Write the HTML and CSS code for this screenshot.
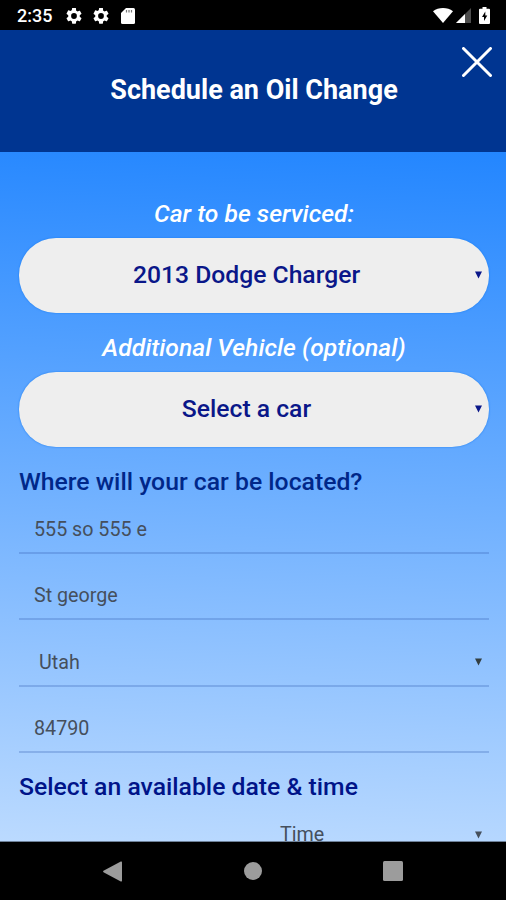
FILE: index.html
```html
<!DOCTYPE html>
<html lang="en">
<head>
  <meta charset="UTF-8" />
  <meta name="viewport" content="width=device-width, initial-scale=1.0"/>
  <title>Schedule an Oil Change</title>
  <link rel="stylesheet" href="styles.css">
</head>
<body>

  <div class="status-bar">
    <span class="clock">2:35</span>
    <svg class="gear" viewBox="2 2 20 20"><path d="M19.14 12.94c.04-.3.06-.61.06-.94 0-.32-.02-.64-.07-.94l2.03-1.58a.49.49 0 0 0 .12-.61l-1.92-3.32a.49.49 0 0 0-.59-.22l-2.39.96c-.5-.38-1.03-.7-1.62-.94l-.36-2.54A.48.48 0 0 0 13.92 2h-3.84c-.24 0-.43.17-.47.41l-.36 2.54c-.59.24-1.13.57-1.62.94l-2.39-.96a.49.49 0 0 0-.59.22L2.74 8.87a.48.48 0 0 0 .12.61l2.03 1.58c-.05.3-.09.63-.09.94s.02.64.07.94l-2.03 1.58a.49.49 0 0 0-.12.61l1.92 3.32c.12.22.37.29.59.22l2.39-.96c.5.38 1.03.7 1.62.94l.36 2.54c.05.24.24.41.48.41h3.84c.24 0 .44-.17.47-.41l.36-2.54c.59-.24 1.13-.56 1.62-.94l2.39.96c.22.08.47 0 .59-.22l1.92-3.32a.48.48 0 0 0-.12-.61zM12 15.6a3.6 3.6 0 1 1 0-7.2 3.6 3.6 0 0 1 0 7.2z"/></svg>
    <svg class="gear" viewBox="2 2 20 20"><path d="M19.14 12.94c.04-.3.06-.61.06-.94 0-.32-.02-.64-.07-.94l2.03-1.58a.49.49 0 0 0 .12-.61l-1.92-3.32a.49.49 0 0 0-.59-.22l-2.39.96c-.5-.38-1.03-.7-1.62-.94l-.36-2.54A.48.48 0 0 0 13.92 2h-3.84c-.24 0-.43.17-.47.41l-.36 2.54c-.59.24-1.13.57-1.62.94l-2.39-.96a.49.49 0 0 0-.59.22L2.74 8.87a.48.48 0 0 0 .12.61l2.03 1.58c-.05.3-.09.63-.09.94s.02.64.07.94l-2.03 1.58a.49.49 0 0 0-.12.61l1.92 3.32c.12.22.37.29.59.22l2.39-.96c.5.38 1.03.7 1.62.94l.36 2.54c.05.24.24.41.48.41h3.84c.24 0 .44-.17.47-.41l.36-2.54c.59-.24 1.13-.56 1.62-.94l2.39.96c.22.08.47 0 .59-.22l1.92-3.32a.48.48 0 0 0-.12-.61zM12 15.6a3.6 3.6 0 1 1 0-7.2 3.6 3.6 0 0 1 0 7.2z"/></svg>
    <svg class="sd-card" viewBox="0 0 14 16"><path d="M5 0h7.5Q14 0 14 1.500v13Q14 16 12.500 16h-11Q0 16 0 14.500V5z"/><path class="slots" d="M5.500 2v2.500M8 2v2.500M10.500 2v2.500"/></svg>
    <span class="spacer"></span>
    <svg class="wifi" viewBox="0 0 20 15"><path d="M10 15 0 3.200Q4.300 0 10 0t10 3.200z"/></svg>
    <svg class="signal" viewBox="0 0 15 15"><path class="dim" d="M15 0v15H0z"/><path d="M9 6v9H0z"/></svg>
    <svg class="battery" viewBox="0 0 11 17"><path d="M3.500 0h4v1.700H10q1 0 1 1V16q0 1-1 1H1q-1 0-1-1V2.700q0-1 1-1h2.500z"/><path class="bolt" d="M6.300 4.500 3 10h2v4L8.300 8.500H6.300z"/></svg>
  </div>

  <header class="header">
    <h1>Schedule an Oil Change</h1>
    <svg class="close" viewBox="0 0 30 30"><path d="M1.500 1.500l27 27M28.500 1.500l-27 27"/></svg>
  </header>

  <main class="form">
    <p class="label">Car to be serviced:</p>
    <div class="pill">
      <span>2013 Dodge Charger</span>
      <svg class="arrow" viewBox="0 0 8 8"><path d="M0 0h8L4 8z"/></svg>
    </div>

    <p class="label optional">Additional Vehicle (optional)</p>
    <div class="pill">
      <span>Select a car</span>
      <svg class="arrow" viewBox="0 0 8 8"><path d="M0 0h8L4 8z"/></svg>
    </div>

    <h2>Where will your car be located?</h2>
    <div class="field street">555 so 555 e</div>
    <div class="field">St george</div>
    <div class="field select">
      <span>Utah</span>
      <svg class="arrow" viewBox="0 0 8 8"><path d="M0 0h8L4 8z"/></svg>
    </div>
    <div class="field">84790</div>

    <h2 class="when">Select an available date &amp; time</h2>
    <div class="time">
      <span>Time</span>
      <svg class="arrow" viewBox="0 0 8 8"><path d="M0 0h8L4 8z"/></svg>
    </div>
  </main>

  <nav class="nav-bar">
    <svg class="back" viewBox="0 0 19 21"><path d="M19 1.200v18.600q0 1.200-1.200.6L.5 11.200Q-.3 10.500.5 9.800L17.800.6Q19 0 19 1.200z"/></svg>
    <svg class="home" viewBox="0 0 18 18"><circle cx="9" cy="9" r="9"/></svg>
    <svg class="recent" viewBox="0 0 20 20"><rect width="20" height="20" rx="1.500"/></svg>
  </nav>

</body>
</html>
```
FILE: styles.css
```css
* {
  box-sizing: border-box;
}

body {
  margin: 0;
  height: 900px;
  display: flex;
  flex-direction: column;
  overflow: hidden;
  font-family: Roboto, sans-serif;
  background: #000;
}

svg {
  display: block;
  flex: none;
}

.status-bar {
  height: 30px;
  flex: none;
  display: flex;
  align-items: center;
  padding: 1px 16px 0 17px;
  color: #fff;
  fill: #fff;
}

.clock {
  width: 49px;
  font-size: 18px;
  font-weight: 500;
  line-height: 20px;
}

.gear {
  width: 16px;
  height: 16px;
  margin-right: 11px;
}

.sd-card {
  width: 14px;
  height: 16px;
  margin-left: 1px;
}

.slots {
  stroke: #777;
  stroke-width: 1.2;
}

.spacer {
  flex: 1;
}

.wifi {
  width: 20px;
  height: 15px;
  margin-right: 3px;
}

.signal {
  width: 15px;
  height: 15px;
  margin-right: 8px;
}

.dim {
  fill: #4d4d4d;
}

.battery {
  width: 11px;
  height: 17px;
}

.bolt {
  fill: #000;
}

.header {
  position: relative;
  height: 122px;
  flex: none;
  display: flex;
  align-items: center;
  justify-content: center;
  padding: 0 0 3px 2px;
  background: #003591;
}

h1 {
  margin: 0;
  font-size: 27px;
  font-weight: 700;
  color: #fff;
}

.close {
  position: absolute;
  top: 17px;
  right: 14px;
  width: 30px;
  height: 30px;
  stroke: #fff;
  stroke-width: 3;
  stroke-linecap: round;
}

.form {
  height: 690px;
  flex: none;
  overflow: hidden;
  padding: 46px 17px 0 19px;
  background: linear-gradient(183deg, #2386ff, #bbdaff);
  border-bottom: 1px solid #6f8299;
}

.label {
  margin: 0;
  height: 32px;
  line-height: 32px;
  font-size: 24.7px;
  font-weight: 500;
  font-style: italic;
  text-align: center;
  color: #fff;
}

.pill {
  position: relative;
  height: 75px;
  margin-top: 8px;
  padding-right: 15px;
  border-radius: 37px;
  background: #eee;
  box-shadow: 0 0 2px #1479ef;
  line-height: 74px;
  font-size: 24.7px;
  font-weight: 500;
  text-align: center;
  color: #0a1789;
}

.label.optional {
  margin-top: 19px;
}

.arrow {
  width: 7px;
  height: 8px;
  fill: currentColor;
}

.pill .arrow {
  position: absolute;
  top: 33px;
  right: 7px;
}

h2 {
  margin: 19px 0 0;
  line-height: 32px;
  font-size: 24.75px;
  font-weight: 500;
  color: #002789;
}

.field {
  height: 66.3px;
  padding: 20px 7px 0 15px;
  border-bottom: 2px solid rgba(50, 95, 175, 0.28);
  line-height: 43px;
  font-size: 19.7px;
  color: #454f5c;
}

.field.street {
  height: 56px;
  padding-top: 10px;
}

.select {
  display: flex;
  align-items: center;
  justify-content: space-between;
  padding-left: 20px;
}

.select .arrow {
  color: #333e40;
}

h2.when {
  margin-top: 18px;
  color: #001489;
}

.time {
  display: flex;
  align-items: center;
  justify-content: space-between;
  margin-top: 16px;
  padding: 0 7px 0 261px;
  line-height: 32px;
  font-size: 19.7px;
  color: #454f5c;
}

.nav-bar {
  height: 58px;
  flex: none;
  display: flex;
  align-items: center;
  justify-content: space-between;
  padding: 0 103px;
  fill: #9c9c9c;
}

.back {
  width: 19px;
  height: 21px;
}

.home {
  width: 18px;
  height: 18px;
}

.recent {
  width: 20px;
  height: 20px;
}
```
